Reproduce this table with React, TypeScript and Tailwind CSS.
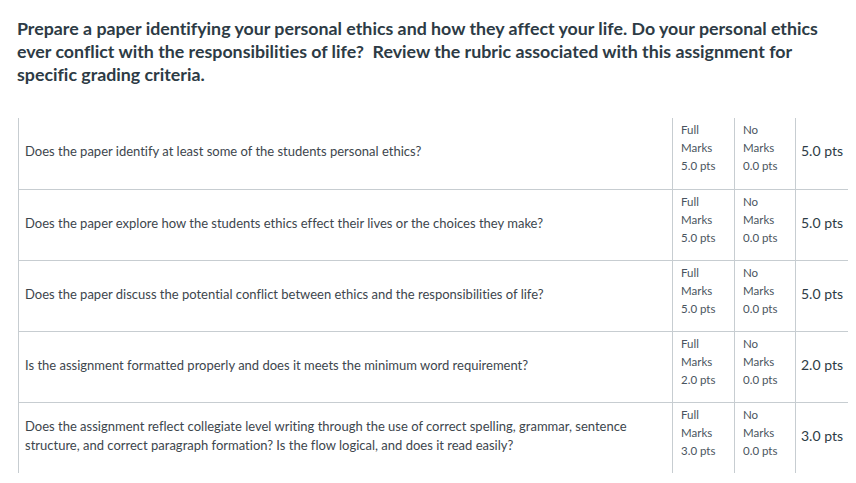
import React from 'react';

interface Criterion {
  text: string[];
  full: string;
  total: string;
}

const criteria: Criterion[] = [
  { text: ['Does the paper identify at least some of the students personal ethics?'], full: '5.0 pts', total: '5.0 pts' },
  { text: ['Does the paper explore how the students ethics effect their lives or the choices they make?'], full: '5.0 pts', total: '5.0 pts' },
  { text: ['Does the paper discuss the potential conflict between ethics and the responsibilities of life?'], full: '5.0 pts', total: '5.0 pts' },
  { text: ['Is the assignment formatted properly and does it meets the minimum word requirement?'], full: '2.0 pts', total: '2.0 pts' },
  {
    text: [
      'Does the assignment reflect collegiate level writing through the use of correct spelling, grammar, sentence',
      'structure, and correct paragraph formation? Is the flow logical, and does it read easily?',
    ],
    full: '3.0 pts',
    total: '3.0 pts',
  },
];

const Rating: React.FC<{ title: string; sub: string; pts: string }> = ({ title, sub, pts }) => (
  <div className="flex flex-col text-[11.5px] leading-[18px] text-[#4a5560]">
    <span>{title}</span>
    <span>{sub}</span>
    <span>{pts}</span>
  </div>
);

export default function App() {
  return (
    <div
      className="w-[856px] h-[483px] overflow-hidden bg-white text-[#2d3b45] [font-variant-ligatures:none]"
      style={{ fontFamily: 'Lato, "Open Sans", sans-serif' }}
    >
      <h1 className="pl-[17px] pt-[17px] pr-[10px] text-[17.8px] leading-[23px] font-bold whitespace-pre-wrap">
        Prepare a paper identifying your personal ethics and how they affect your life. Do your personal ethics{'\n'}
        ever conflict with the responsibilities of life?  Review the rubric associated with this assignment for{'\n'}
        specific grading criteria.
      </h1>

      <div className="ml-[18px] mt-[32px] w-[830px] border-l border-[#c7cdd1]">
        {criteria.map((c, i) => (
          <div
            key={i}
            className={`flex h-[71px] ${i > 0 ? 'border-t border-[#c7cdd1]' : ''}`}
          >
            <div className="w-[653px] flex flex-col justify-center pl-[6px] pr-3 pb-[4px] text-[13px] leading-[19px] text-[#3d464d]">
              {c.text.map((t, j) => (
                <span key={j}>{t}</span>
              ))}
            </div>
            <div className="w-[62px] border-l border-[#c7cdd1] pl-[8px] pt-[3px]">
              <Rating title="Full" sub="Marks" pts={c.full} />
            </div>
            <div className="w-[61px] border-l border-[#c7cdd1] pl-[8px] pt-[3px]">
              <Rating title="No" sub="Marks" pts="0.0 pts" />
            </div>
            <div className="flex-1 border-l border-[#c7cdd1] pl-[5px] pb-[6px] flex items-center text-[14px] text-[#2d3b45]">
              {c.total}
            </div>
          </div>
        ))}
      </div>
    </div>
  );
}
